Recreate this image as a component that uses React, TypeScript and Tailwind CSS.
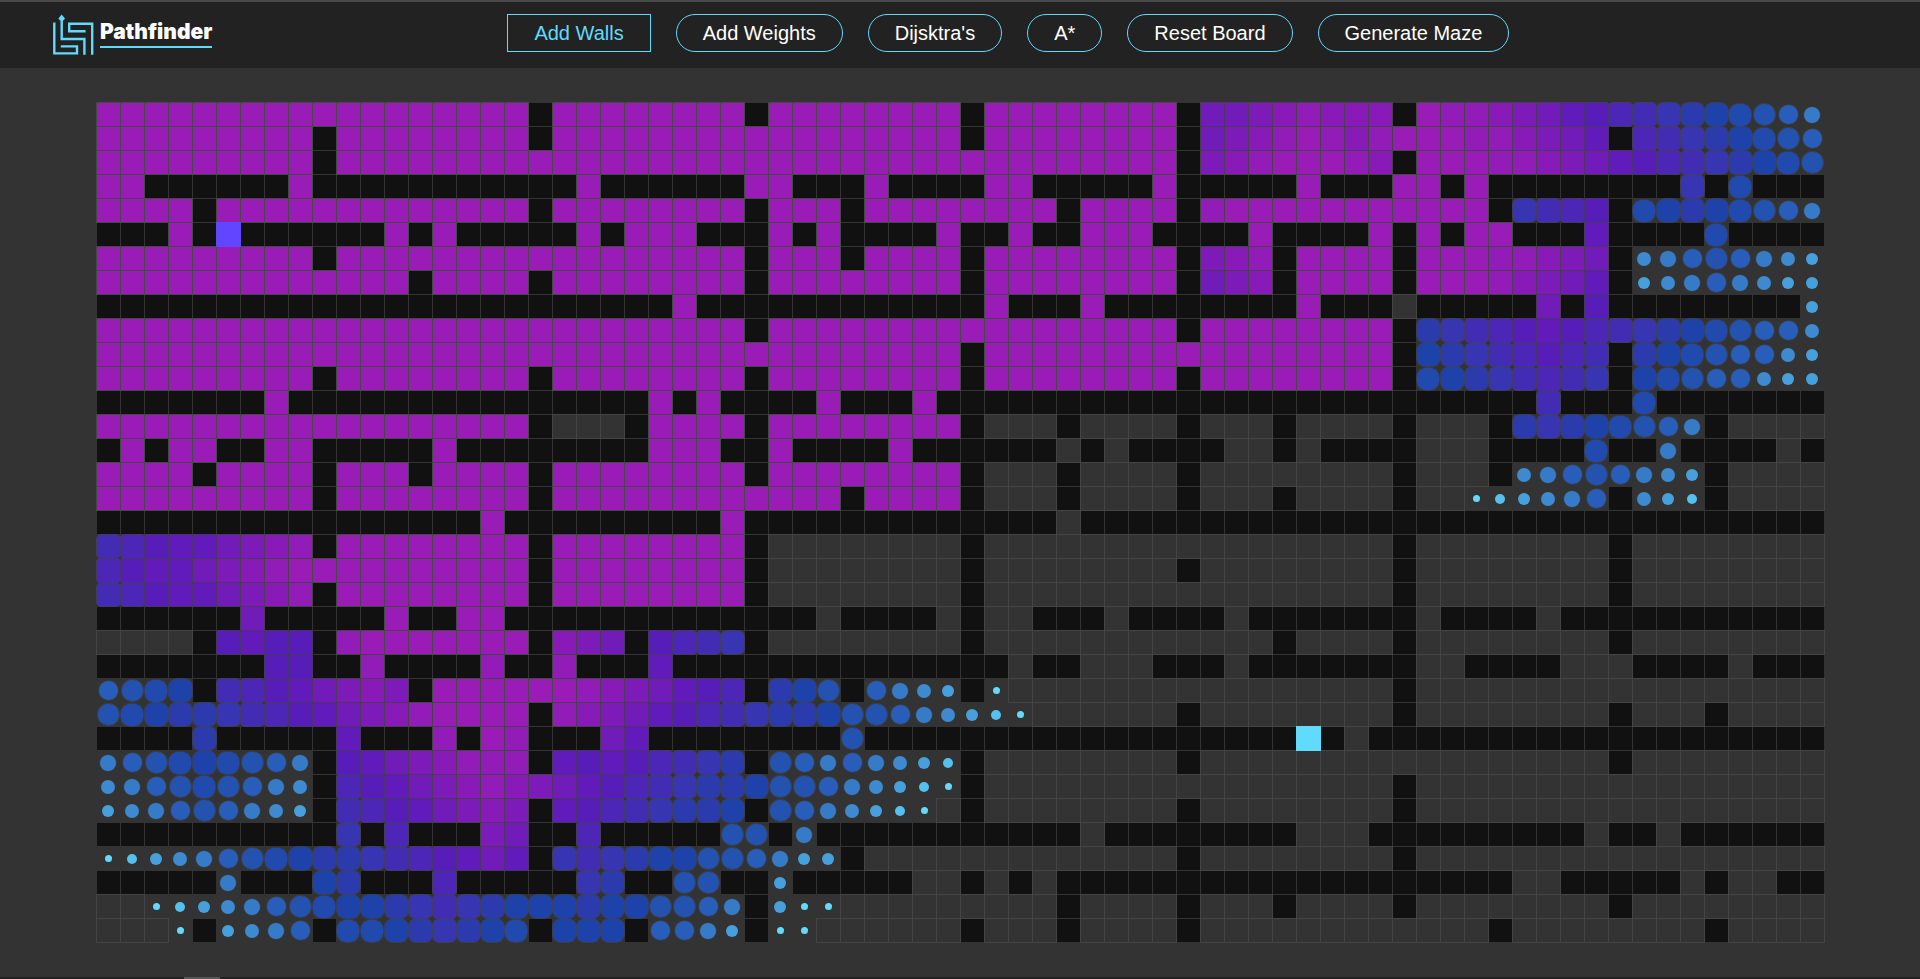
import React, { useState } from "react";

// One character per cell: "#" wall, "." open, "S" start, "T" target, "M" visited,
// and "a".."s" are the stages of the visiting animation from youngest to oldest.
const ROWS: string[][] = [
  ["MMMMMMMMMMMMMMMMMM#MMMMM", "MMM#MMMMMMMM#MMMMMMMM#pp", "qrsrrr#Mssrqponmlkjihgfe"],
  ["MMMMMMMMM#MMMMMMMM#MMMMM", "MMMMMMMMMMMM#MMMMMMMM#pq", "rsMsrsMMMssrqpo#mlkjihgf"],
  ["MMMMMMMMM#MMMMMMMMMMMMMM", "MMMMMMMMMMMMMMMMMMMMM#qr", "sMMMsr#MMMssrqponmlkjihg"],
  ["MM######M###########M###", "###MM###M####MM#####M###", "##M###MM#M########k#h###"],
  ["MMMM#MMMMMMMMMMMMM#MMMMM", "MMM#MMM#MMMMMMMM#MMMM#sM", "MMMMMMMMMM#klmn#hijihgfe"],
  ["###M#S######M#M#####M#MM", "M###M#M####M##M##MMM####", "M####M#M#MM###o####h####"],
  ["MMMMMMMMM#MMMMMMMMMMMMMM", "MMM#MMM#MMMM#MMMMMMMM#qr", "s#MMMM#MMMssrqp#defgfedc"],
  ["MMMMMMMMMMMMM#MMMM#MMMMM", "MMM#MMMMMMMM#MMMMMMMM#pq", "r#MMMM#MMMsrqpo#cdefedcc"],
  ["########################", "M############M###M######", "##M###.#####p#n########c"],
  ["MMMMMMMMMMMMMMMMMMMMMMMM", "MMM#MMMMMMMMMMMMMMMMM#MM", "MMMMMM#jklmnonmlkjihgffd"],
  ["MMMMMMMMMMMMMMMMMMMMMMMM", "MMMMMMMMMMMM#MMMMMMMMMMM", "MMMMMM#ijklmnml#jihgffdc"],
  ["MMMMMMMMM#MMMMMMMM#MMMMM", "MMM#MMMMMMMM#MMMMMMMM#MM", "MMMMMM#hijklmlk#ihgffdcc"],
  ["#######M###############M", "#M####M###M#############", "############l###h#######"],
  ["MMMMMMMMMMMMMMMMMM#...#M", "MMM#MMMMMMMM#...#....#..", ".#....#...#jkjihgfe#...."],
  ["#M#MM##MM#####M########M", "MM##M####M######.#.####.", ".#.####...####h##e####.#"],
  ["MMMM#MMMM#MMM#MMMM#MMMMM", "MMM#MMMMMMMM#...#....#..", "......#...#defgfedc#...."],
  ["MMMMMMMMM#MMMMMMMM#MMMMM", "MMMMMMM#MMMM#...#....#..", ".#....#..abcdef#dcb#...."],
  ["################M#######", "##M#############.#######", "########################"],
  ["lmnoopqrs#MMMMMMMM#MMMMM", "MMM#........#...........", "......#........#........"],
  ["mnoopqrsMMMMMMMMMM#MMMMM", "MMM#........#........#..", "......#........#........"],
  ["lmnoopqrs#MMMMMMMM#MMMMM", "MMM#........#...........", "......#........#........"],
  ["######p#####M##MM#######", "######.####.#..###.####.", "#######.####.###########"],
  ["....#nonn#sMMMMMMM#rqp#n", "mlk#........#...........", ".#....#........#........"],
  ["#######nn##s####s##s###o", "##############.##...###.", "#######..####...####.###"],
  ["fghi#lmnopqrq#MMMMMMsrqp", "onm#jig#fedc#a..........", "......#................."],
  ["ghijjklmnopqrsMMMM#srqpo", "nmlkjjiggfedcba......#..", "......#........#...#...."],
  ["####j#####o###s#Ms###po#", "#######g################", "##T#.###################"],
  ["efghihgfe#nopqrsss#ononm", "lkj#gfefedcb#........#..", "...............#........"],
  ["defghgfed#mnopqrsrqponml", "kjjiggfedcba#...........", "......#................."],
  ["cdefgfedc#lmnopqrq#onmlk", "jji#gfedcba.#........#..", "......#................."],
  ["##########k#m###qp##m###", "##gg#e###########.######", "##...#########.##.######"],
  ["abcdefghijjklmnopo#klkji", "iggfecc#.............#..", "......#................."],
  ["#####e###ij###m#####kj##", "gg##c#####..#.#.########", "###########..#####.#..##"],
  ["..abcdefghiijklkjiiijiig", "gfe#caa.........#....#..", ".#....#........#........"],
  ["...a#cdef#hhijkjih#iii#f", "fec#aa......#...#....#..", "..........#........#...."],
];

// Full-bleed cells overlap their neighbours by one pixel so that borders collapse.
const CELLS: Record<string, string> = {
  "#": "bg-[#111111] border border-[#333333] z-0",
  ".": "bg-[#333333] border border-[#444444] z-1",
  M: "bg-[#9a1cb7] border border-[#424a42] z-2",
  s: "bg-[#921cb8] border border-[#474245] z-3",
  r: "bg-[#881bb8] border border-[#4a3f4c] z-3",
  q: "bg-[#7d1bb8] border border-[#4b3c52] z-3",
  p: "bg-[#711bb9] border border-[#4a3958] z-3",
  S: "bg-[#6246ff] z-5",
  T: "bg-[#61dafb] z-5",
};

const STAGES: Record<string, string> = {
  a: "size-[7px] rounded-full bg-[#61dafb]",
  b: "size-[10px] rounded-full bg-[#55c0ec]",
  c: "size-[12px] rounded-full bg-[#479fdc]",
  d: "size-[14px] rounded-full bg-[#3d8ad0]",
  e: "size-[16px] rounded-full bg-[#357bc8] ring-1 ring-[#3d4a5a]/40",
  f: "size-[19px] rounded-full bg-[#295dba] ring-1 ring-[#3d4a5a]/50",
  g: "size-[21px] rounded-[10px] bg-[#2452b1] ring-1 ring-[#3d4a5a]/60",
  h: "size-[22px] rounded-[9px] bg-[#204aae] ring-1 ring-[#3d4560]/60",
  i: "size-[23px] rounded-[8px] bg-[#1d43ab] ring-1 ring-[#3d4560]/70",
  j: "size-[23px] rounded-[7px] bg-[#2b3bae] ring-1 ring-[#3d4258]/80",
  k: "size-[23px] rounded-[6px] bg-[#3735b1] ring-1 ring-[#403f58]/90",
  l: "size-[25px] rounded-[5px] bg-[#432cb4] border border-[#443d5c]",
  m: "size-[25px] rounded-[4px] bg-[#4c26b6] border border-[#463a5e]",
  n: "size-[25px] rounded-[2px] bg-[#561db8] border border-[#483664]",
  o: "size-[25px] bg-[#601bba] border border-[#493664]",
};

function Cell({ kind }: { kind: string }) {
  const full = CELLS[kind];
  if (full) {
    return <div className={`relative size-[25px] shrink-0 -mr-px ${full}`} />;
  }
  return (
    <div className="relative z-3 -mr-px flex size-[25px] shrink-0 items-center justify-center">
      <div className={`relative shrink-0 ${STAGES[kind]}`} />
    </div>
  );
}

function Board() {
  return (
    <div role="img" aria-label="Board" className="mx-auto flex w-max flex-col pr-px pb-px">
      {ROWS.map((parts, y) => (
        <div key={y} className="flex h-6">
          {parts
            .join("")
            .split("")
            .map((kind, x) => (
              <Cell key={x} kind={kind} />
            ))}
        </div>
      ))}
    </div>
  );
}

function Logo() {
  return (
    <svg width="42" height="42" viewBox="12 14 42 42" fill="none" stroke="#61dafb" strokeWidth="2.4" aria-hidden="true">
      <path d="M14.3 22.6V53.4H37V46.4H20.8" />
      <path d="M21.7 18V39H44.4V54.8" />
      <path d="M52.2 54.8V23.8H29.2V31.2H45.6" />
      <path d="M21.7 14.6L25 18.4L23.4 20.6H20L18.4 18.4Z" fill="#61dafb" stroke="none" />
    </svg>
  );
}

const ACTIONS = ["Add Walls", "Add Weights", "Dijsktra's", "A*", "Reset Board", "Generate Maze"];

export default function App() {
  const [active, setActive] = useState("Add Walls");
  return (
    <div className="flex min-h-screen flex-col overflow-x-hidden bg-[#333333] font-['Liberation_Sans',Arial,sans-serif] text-white">
      <header className="flex items-start gap-[295px] border-t-2 border-[#4a4a4a] bg-[#222222] pt-3 pb-3 pl-[52px]">
        <a href="#" className="flex items-start gap-1.5">
          <Logo />
          <span className="mt-1.5 border-b-2 border-[#61dafb] pb-0.5 font-['Inter',sans-serif] text-[21px] leading-6 font-black">
            Pathfinder
          </span>
        </a>
        <nav className="flex gap-[25px]">
          {ACTIONS.map((label) => (
            <button
              key={label}
              type="button"
              onClick={() => setActive(label)}
              className={
                label === active
                  ? "h-[38px] border border-[#61dafb] px-[26px] text-xl leading-6 whitespace-nowrap text-[#61dafb]"
                  : "h-[38px] rounded-full border border-[#61dafb] px-[26px] text-xl leading-6 whitespace-nowrap"
              }
            >
              {label}
            </button>
          ))}
        </nav>
      </header>
      <main className="flex-1 pt-[34px]">
        <Board />
      </main>
      <div className="h-0.5 bg-[#222222] pl-46">
        <div className="h-full w-9 bg-[#555555]" />
      </div>
    </div>
  );
}
